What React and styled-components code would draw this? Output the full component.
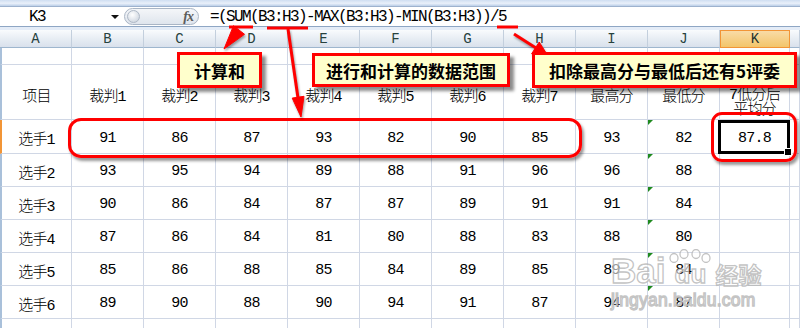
import React from 'react';
import styled, { createGlobalStyle, css } from 'styled-components';

const Global = createGlobalStyle`
  html, body { margin: 0; padding: 0; background: #fff; }
  body { width: 800px; height: 328px; overflow: hidden; }
`;

const CELL_FONT = `"Liberation Mono", "Noto Sans CJK SC", monospace`;
const GRID = '#d0d7e5';
const COLS = '72px repeat(9, 72px) 70px 1fr';

const Page = styled.div`
  position: relative;
  width: 800px;
  height: 328px;
  overflow: hidden;
  background: #fff;
  font-family: ${CELL_FONT};
`;

const RibbonEdge = styled.div`
  height: 6px;
  background: linear-gradient(#cfdef1, #e9f0fa 55%, #bccfe8);
  border-bottom: 1px solid #9db2ce;
`;

const FormulaBar = styled.div`
  display: flex;
  align-items: center;
  height: 19px;
  background: #fff;
  border-bottom: 1px solid #8ea6c4;
`;

const NameBox = styled.div`
  width: 124px;
  height: 100%;
  display: flex;
  align-items: center;
`;

const NameText = styled.span`
  width: 74px;
  text-align: center;
  font-size: 16px;
  letter-spacing: -1.5px;
  color: #000;
  padding-top: 1px;
`;

const DropArrow = styled.span`
  margin-left: auto;
  margin-right: 5px;
  width: 0;
  height: 0;
  border-left: 4px solid transparent;
  border-right: 4px solid transparent;
  border-top: 4px solid #111;
`;

const FxPill = styled.div`
  width: 75px;
  height: 17px;
  box-sizing: border-box;
  border: 1px solid #a9b5c5;
  border-radius: 9px;
  background: linear-gradient(#f4f6f9, #dfe5ed);
  display: flex;
  align-items: center;
  justify-content: space-between;
  padding: 0 5px 0 2px;
`;

const Knob = styled.span`
  width: 11px;
  height: 11px;
  border-radius: 50%;
  border: 1px solid #aeb8c6;
  background: radial-gradient(circle at 40% 35%, #ffffff, #c4cdd9);
`;

const Fx = styled.span`
  font-family: "Liberation Serif", serif;
  font-style: italic;
  font-weight: bold;
  font-size: 14px;
  color: #5c5c5c;
  letter-spacing: -1px;
`;

const Formula = styled.span`
  margin-left: 11px;
  font-size: 16px;
  letter-spacing: -1.6px;
  color: #000;
  white-space: nowrap;
  padding-top: 1px;
`;

const Strip = styled.div`
  height: 3px;
  background: #e4ecf7;
`;

const HeadRow = styled.div`
  display: grid;
  grid-template-columns: ${COLS};
  height: 18px;
`;

const ColHead = styled.div`
  box-sizing: border-box;
  display: flex;
  align-items: center;
  justify-content: center;
  font-size: 14px;
  color: #27413e;
  background: linear-gradient(#f9fbfd, #e6ecf3 55%, #d9e1ec);
  border-right: 1px solid #c3cfdd;
  border-bottom: 1px solid #9eb6ce;
  ${(p) =>
    p.$selected &&
    css`
      background: linear-gradient(#f9dba6, #f3c56a);
      border: 1px solid #f29536;
      color: #20302e;
    `}
`;

const Row = styled.div`
  display: grid;
  grid-template-columns: ${COLS};
  height: ${(p) => p.$h}px;
`;

const Cell = styled.div`
  position: relative;
  box-sizing: border-box;
  display: flex;
  align-items: center;
  justify-content: center;
  padding-top: ${(p) => (p.$pt != null ? p.$pt : 3)}px;
  font-size: 15px;
  font-weight: 300;
  letter-spacing: -0.8px;
  color: #000;
  border-right: 1px solid ${GRID};
  border-bottom: 1px solid ${GRID};
  white-space: nowrap;
  ${(p) =>
    p.$first &&
    css`
      border-left: 2px solid ${p.$active ? '#f29536' : '#a9c0da'};
    `}
  ${(p) =>
    p.$flag &&
    css`
      &::before {
        content: '';
        position: absolute;
        left: 0;
        top: 0;
        border-top: 5px solid #1f8a1f;
        border-right: 5px solid transparent;
      }
    `}
  ${(p) =>
    p.$selected &&
    css`
      &::after {
        content: '';
        position: absolute;
        left: -2px;
        top: 0px;
        right: -1px;
        bottom: -1px;
        border: 3px solid #000;
      }
    `}
`;

const Handle = styled.span`
  position: absolute;
  right: -3px;
  bottom: -3px;
  width: 6px;
  height: 6px;
  background: #000;
  border: 1px solid #fff;
  z-index: 2;
`;

const WrapText = styled.div`
  display: flex;
  flex-direction: column;
  align-items: center;
  justify-content: flex-end;
  height: 100%;
  line-height: 15px;
  padding-bottom: 1px;
  box-sizing: border-box;
  overflow: hidden;
`;

const Callout = styled.div`
  position: absolute;
  left: ${(p) => p.$x}px;
  top: ${(p) => p.$y}px;
  width: ${(p) => p.$w}px;
  height: ${(p) => p.$h}px;
  box-sizing: border-box;
  background: #ffffcc;
  border: 3px solid #ff0000;
  box-shadow: 4px 4px 3px rgba(0, 0, 0, 0.45);
  display: flex;
  align-items: center;
  justify-content: center;
  font-family: "Noto Sans CJK SC", "Liberation Sans", sans-serif;
  font-weight: 700;
  font-size: 17px;
  color: #000;
  white-space: nowrap;
  padding-top: 1px;
`;

const RoundMark = styled.div`
  position: absolute;
  left: ${(p) => p.$x}px;
  top: ${(p) => p.$y}px;
  width: ${(p) => p.$w}px;
  height: ${(p) => p.$h}px;
  box-sizing: border-box;
  border: 3px solid #f00;
  border-radius: ${(p) => p.$r}px;
  box-shadow: 2px 3px 3px rgba(0, 0, 0, 0.4);
  pointer-events: none;
`;

const ArrowLayer = styled.svg`
  position: absolute;
  left: 0;
  top: 0;
  pointer-events: none;
`;

const Watermark = styled.div`
  position: absolute;
  left: 611px;
  top: 251px;
  display: flex;
  flex-direction: column;
  gap: 2px;
  pointer-events: none;
  color: rgba(255, 255, 255, 0.6);
  -webkit-text-stroke: 1.3px rgba(180, 180, 180, 0.8);
`;

const WmLogo = styled.div`
  display: flex;
  align-items: flex-end;
  height: 37px;
  font-family: "Liberation Sans", sans-serif;
  font-weight: 700;
  font-size: 35px;
  line-height: 34px;
`;

const Paw = styled.span`
  position: relative;
  display: inline-block;
  width: 50px;
  text-align: center;
  font-size: 26px;
  line-height: 27px;
`;

const PawToes = styled.svg`
  position: absolute;
  left: 2px;
  top: -12px;
`;

const WmCjk = styled.span`
  font-family: "Noto Sans CJK SC", sans-serif;
  font-size: 23px;
  line-height: 27px;
  font-weight: 700;
`;

const WmUrl = styled.div`
  font-family: "Liberation Sans", sans-serif;
  font-size: 17.5px;
  letter-spacing: 0.2px;
`;

const COLUMNS = ['A', 'B', 'C', 'D', 'E', 'F', 'G', 'H', 'I', 'J', 'K', ''];
const HEADERS = ['项目', '裁判1', '裁判2', '裁判3', '裁判4', '裁判5', '裁判6', '裁判7', '最高分', '最低分'];
const PLAYERS = [
  ['选手1', 91, 86, 87, 93, 82, 90, 85, 93, 82, '87.8'],
  ['选手2', 93, 95, 94, 89, 88, 91, 96, 96, 88, ''],
  ['选手3', 90, 86, 84, 87, 87, 89, 91, 91, 84, ''],
  ['选手4', 87, 86, 84, 81, 80, 88, 83, 88, 80, ''],
  ['选手5', 85, 86, 88, 85, 84, 89, 85, 89, 84, ''],
  ['选手6', 89, 90, 88, 90, 94, 91, 87, 94, 87, ''],
  ['', '', '', '', '', '', '', '', '', '', ''],
];

export default function App() {
  return (
    <Page>
      <Global />
      <RibbonEdge />
      <FormulaBar>
        <NameBox>
          <NameText>K3</NameText>
          <DropArrow />
        </NameBox>
        <FxPill>
          <Knob />
          <Fx>fx</Fx>
        </FxPill>
        <Formula>=(SUM(B3:H3)-MAX(B3:H3)-MIN(B3:H3))/5</Formula>
      </FormulaBar>
      <Strip />
      <HeadRow>
        {COLUMNS.map((c, i) => (
          <ColHead key={i} $selected={c === 'K'}>
            {c}
          </ColHead>
        ))}
      </HeadRow>
      <Row $h={17}>
        {COLUMNS.map((c, i) => (
          <Cell key={i} $first={i === 0} />
        ))}
      </Row>
      <Row $h={55}>
        {HEADERS.map((h, i) => (
          <Cell key={i} $first={i === 0} $pt={5}>
            {h}
          </Cell>
        ))}
        <Cell $pt={0}>
          <WrapText>
            <span>7低分后</span>
            <span>平均分</span>
          </WrapText>
        </Cell>
        <Cell />
      </Row>
      {PLAYERS.map((r, ri) => (
        <Row key={ri} $h={ri === 0 ? 34 : 33}>
          {r.map((v, ci) => (
            <Cell
              key={ci}
              $first={ci === 0}
              $active={ri === 0 && ci === 0}
              $flag={ci === 9 && ri < 6}
              $selected={ri === 0 && ci === 10}
            >
              {v}
              {ri === 0 && ci === 10 && <Handle />}
            </Cell>
          ))}
          <Cell />
        </Row>
      ))}

      <RoundMark $x={68} $y={118} $w={514} $h={40} $r={13} />
      <RoundMark $x={711} $y={112} $w={86} $h={50} $r={11} />

      <ArrowLayer width="800" height="328" viewBox="0 0 800 328">
        <g stroke="#f00" strokeWidth="3" strokeLinecap="butt">
          <line x1="229" y1="27" x2="253" y2="27" />
          <line x1="267" y1="28" x2="308" y2="28" />
          <line x1="497" y1="27" x2="518" y2="27" />
        </g>
        <g fill="#f00" stroke="#f00" style={{ filter: 'drop-shadow(1px 2px 1px rgba(0,0,0,0.35))' }}>
          <polygon points="224,49 244.5,34.3 233.5,25.7" />
          <line x1="288" y1="29" x2="298" y2="98" strokeWidth="3" />
          <polygon points="301,117 304,96.3 292.2,98.1" />
          <line x1="514" y1="34" x2="536" y2="48" strokeWidth="3" />
          <polygon points="548,56 531.6,53.8 539.2,42" />
        </g>
      </ArrowLayer>

      <Callout $x={177} $y={52} $w={85} $h={36}>计算和</Callout>
      <Callout $x={312} $y={53} $w={198} $h={34}>进行和计算的数据范围</Callout>
      <Callout $x={532} $y={52} $w={265} $h={36}>扣除最高分与最低后还有5评委</Callout>

      <Watermark>
        <WmLogo>
          <span>Bai</span>
          <Paw>
            <PawToes width="46" height="14" viewBox="0 0 46 14">
              <g fill="rgba(255,255,255,0.5)" stroke="rgba(180,180,180,0.8)" strokeWidth="1.3">
                <ellipse cx="7" cy="9" rx="4" ry="4.5" />
                <ellipse cx="17" cy="5" rx="4" ry="4.5" />
                <ellipse cx="29" cy="5" rx="4" ry="4.5" />
                <ellipse cx="39" cy="9" rx="4" ry="4.5" />
              </g>
            </PawToes>
            du
          </Paw>
          <WmCjk>经验</WmCjk>
        </WmLogo>
        <WmUrl>jingyan.baidu.com</WmUrl>
      </Watermark>
    </Page>
  );
}
